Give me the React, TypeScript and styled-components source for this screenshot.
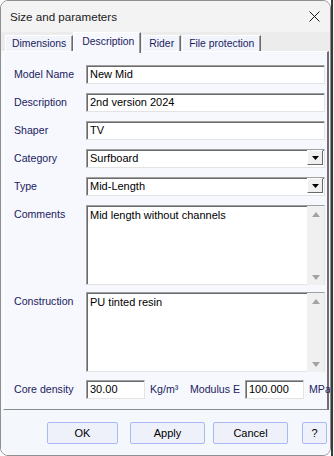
import React from "react";
import styled, { createGlobalStyle } from "styled-components";

const GlobalStyle = createGlobalStyle`
  html, body {
    margin: 0;
    padding: 0;
    background: linear-gradient(to right, #ffffff 0, #ffffff 331px, #3a3a3a 331px, #3a3a3a 333px, #f2f2f2 333px);
  }
  body {
    font-family: "Liberation Sans", Arial, sans-serif;
  }
`;

const fields = [
    { label: "Model Name", value: "New Mid" },
    { label: "Description", value: "2nd version 2024" },
    { label: "Shaper", value: "TV" },
];

const selects = [
    { label: "Category", value: "Surfboard" },
    { label: "Type", value: "Mid-Length" },
];

const tabs = ["Dimensions", "Description", "Rider", "File protection"];

const Dialog = styled.div`
    width: 329px;
    height: 454px;
    border: 1px solid #8f8f8f;
    border-radius: 8px;
    overflow: hidden;
    display: flex;
    flex-direction: column;
    background: #f4f7fc;
    box-sizing: content-box;
`;

const TitleBar = styled.div`
    height: 31px;
    flex: none;
    display: flex;
    align-items: center;
    justify-content: space-between;
    padding: 0 10px 0 9px;
    background: #f3f3f3;
    font-size: 11.6px;
    color: #1a1a1a;
`;

const TabStrip = styled.div`
    height: 19px;
    flex: none;
    display: flex;
    align-items: flex-end;
    padding-left: 3px;
    background: #ececec;
    position: relative;
    z-index: 2;
`;

const Tab = styled.div<{ $active?: boolean }>`
    height: ${({ $active }) => ($active ? "21px" : "16px")};
    margin-bottom: ${({ $active }) => ($active ? "-2px" : "0")};
    padding: ${({ $active }) => ($active ? "1px 6px 0 8px" : "0 6px 0 6px")};
    box-sizing: border-box;
    display: flex;
    align-items: ${({ $active }) => ($active ? "flex-start" : "center")};
    font-size: 10.4px;
    color: #1b2260;
    background: ${({ $active }) => ($active ? "#f6f8fd" : "#f1f4fa")};
    border-top: 1px solid #ffffff;
    border-left: 1px solid #ffffff;
    border-right: 1px solid #6a6a6a;
    box-shadow: inset -1px 0 0 #a0a0a0;
    line-height: 16px;
    margin-left: ${({ $active }) => ($active ? "0" : "1px")};
`;

const Panel = styled.div`
    height: 359px;
    flex: none;
    margin: 0 1px 0 2px;
    box-sizing: border-box;
    border-left: 1px solid #ffffff;
    border-top: 1px solid #ffffff;
    border-right: 2px solid #6e6e6e;
    border-bottom: 1px solid #8a8a8a;
    background: #f6f8fd;
    padding: 13px 1px 0 10px;
    display: flex;
    flex-direction: column;
    gap: 9px;
`;

const Row = styled.div<{ $gap?: number }>`
    display: flex;
    align-items: flex-start;
    margin-top: ${({ $gap }) => ($gap ? `${$gap}px` : "0")};
`;

const Label = styled.div<{ $width?: number }>`
    width: ${({ $width }) => ($width ? `${$width}px` : "72px")};
    flex: none;
    font-size: 10.6px;
    line-height: 13px;
    padding-top: 3px;
    color: #1b2260;
    white-space: nowrap;
    box-sizing: border-box;
`;

const InputBox = styled.div<{ $width?: number; $height?: number }>`
    width: ${({ $width }) => ($width ? `${$width}px` : "239px")};
    height: ${({ $height }) => ($height ? `${$height}px` : "19px")};
    flex: none;
    box-sizing: border-box;
    background: #ffffff;
    border-top: 1px solid #a0a0a0;
    border-left: 1px solid #a0a0a0;
    border-right: 1px solid #e3e3e3;
    border-bottom: 1px solid #e3e3e3;
    box-shadow: inset 1px 1px 0 #6a6a6a;
    font-size: 11px;
    line-height: 13px;
    color: #000000;
    padding: 2px 0 0 3px;
    position: relative;
    display: flex;
`;

const SelectText = styled.div`
    flex: 1;
    padding: 1px 0 0 3px;
`;

const DropButton = styled.div`
    width: 16px;
    height: 15px;
    margin: -1px 0 0 0;
    box-sizing: border-box;
    background: #f0f0f0;
    border-top: 1px solid #ffffff;
    border-left: 1px solid #ffffff;
    border-right: 1px solid #6a6a6a;
    border-bottom: 1px solid #6a6a6a;
    display: flex;
    align-items: center;
    justify-content: center;
`;

const AreaText = styled.div`
    flex: 1;
    padding-top: 1px;
`;

const ScrollBar = styled.div`
    width: 17px;
    margin: -2px 0 -1px 0;
    background: #f0f0f0;
    display: flex;
    flex-direction: column;
    justify-content: space-between;
    align-items: center;
    padding: 6px 0 5px;
    box-sizing: border-box;
`;

const Unit = styled.div<{ $width: number }>`
    width: ${({ $width }) => `${$width}px`};
    flex: none;
    box-sizing: border-box;
    font-size: 10.6px;
    line-height: 13px;
    padding: 3px 0 0 5px;
    color: #1b2260;
    white-space: nowrap;
`;

const Footer = styled.div`
    flex: 1;
    display: flex;
    align-items: flex-start;
    padding: 12px 0 0 46px;
    background: #f4f7fc;
`;

const Button = styled.div<{ $width: number; $gap?: number }>`
    width: ${({ $width }) => `${$width}px`};
    height: 22px;
    margin-left: ${({ $gap }) => ($gap ? `${$gap}px` : "0")};
    box-sizing: border-box;
    border: 1px solid #a9b8f6;
    border-radius: 2px;
    background: #eef1f9;
    display: flex;
    align-items: center;
    justify-content: center;
    font-size: 11px;
    color: #000000;
`;

const ArrowDown = ({ color = "#000" }: { color?: string }) => (
    <svg width="7" height="4" viewBox="0 0 7 4">
        <path d="M0 0 H7 L3.5 4 Z" fill={color} />
    </svg>
);

const ArrowUp = ({ color = "#a3a3a3" }: { color?: string }) => (
    <svg width="8" height="5" viewBox="0 0 8 5">
        <path d="M0 5 H8 L4 0 Z" fill={color} />
    </svg>
);

const CloseIcon = () => (
    <svg width="11" height="11" viewBox="0 0 11 11">
        <path d="M0.5 0.5 L10.5 10.5 M10.5 0.5 L0.5 10.5" stroke="#1a1a1a" strokeWidth="1" />
    </svg>
);

const TextArea = ({ text }: { text: string }) => (
    <InputBox $height={80}>
        <AreaText>{text}</AreaText>
        <ScrollBar>
            <ArrowUp />
            <svg width="8" height="5" viewBox="0 0 8 5">
                <path d="M0 0 H8 L4 5 Z" fill="#a3a3a3" />
            </svg>
        </ScrollBar>
    </InputBox>
);

export default function App() {
    return (
        <>
            <GlobalStyle />
            <Dialog>
                <TitleBar>
                    <span>Size and parameters</span>
                    <CloseIcon />
                </TitleBar>
                <TabStrip>
                    {tabs.map((t) => (
                        <Tab key={t} $active={t === "Description"}>{t}</Tab>
                    ))}
                </TabStrip>
                <Panel>
                    {fields.map((f) => (
                        <Row key={f.label}>
                            <Label>{f.label}</Label>
                            <InputBox>{f.value}</InputBox>
                        </Row>
                    ))}
                    {selects.map((s) => (
                        <Row key={s.label}>
                            <Label>{s.label}</Label>
                            <InputBox style={{ padding: "1px 1px 0 0" }}>
                                <SelectText>{s.value}</SelectText>
                                <DropButton>
                                    <ArrowDown />
                                </DropButton>
                            </InputBox>
                        </Row>
                    ))}
                    <Row>
                        <Label>Comments</Label>
                        <TextArea text="Mid length without channels" />
                    </Row>
                    <Row $gap={-2}>
                        <Label>Construction</Label>
                        <TextArea text="PU tinted resin" />
                    </Row>
                    <Row $gap={-1}>
                        <Label>Core density</Label>
                        <InputBox $width={59} $height={19}>30.00</InputBox>
                        <Unit $width={45}>Kg/m³</Unit>
                        <Label $width={55}>Modulus E</Label>
                        <InputBox $width={59} $height={19}>100.000</InputBox>
                        <Unit $width={22}>MPa</Unit>
                    </Row>
                </Panel>
                <Footer>
                    <Button $width={71}>OK</Button>
                    <Button $width={75} $gap={12}>Apply</Button>
                    <Button $width={75} $gap={8}>Cancel</Button>
                    <Button $width={25} $gap={14}>?</Button>
                </Footer>
            </Dialog>
        </>
    );
}
